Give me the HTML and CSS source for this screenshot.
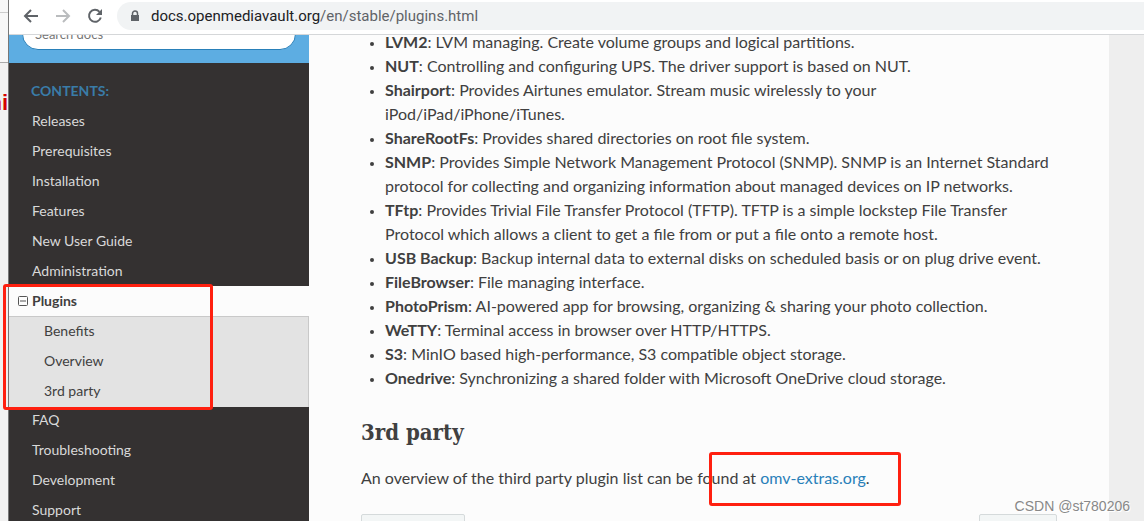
FILE: index.html
```html
<!DOCTYPE html>
<html lang="en">
<head>
  <meta charset="UTF-8" />
  <meta name="viewport" content="width=device-width, initial-scale=1" />
  <title>Plugins — openmediavault</title>
  <link rel="stylesheet" href="styles.css">
</head>
<body>
  <div class="behind">
    <div class="behind-tab"></div>
    <div class="behind-bar"></div>
    <div class="behind-text">ni</div>
  </div>

  <div class="browser">
    <header class="toolbar">
      <button type="button" class="nav-btn" aria-label="Back">
        <svg viewBox="0 0 16 16"><path d="M15 8H2M8 2L2 8l6 6" /></svg>
      </button>
      <button type="button" class="nav-btn" aria-label="Forward" disabled>
        <svg viewBox="0 0 16 16"><path d="M1 8h13M8 2l6 6-6 6" /></svg>
      </button>
      <button type="button" class="nav-btn" aria-label="Reload">
        <svg viewBox="0 0 16 16"><path d="M12.500 3.800A6 6 0 1 0 13.800 9.500" /><path class="solid" d="M15 1v6H9z" /></svg>
      </button>
      <div class="address">
        <svg class="lock" viewBox="0 0 10 12"><path d="M1 5h8v6H1z" /><path class="shackle" d="M2.500 5V3.500a2.500 2.500 0 0 1 5 0V5" /></svg>
        <span class="url"><b>docs.openmediavault.org</b>/en/stable/plugins.html</span>
      </div>
    </header>

    <div class="page">
      <nav class="sidebar">
        <div class="search">
          <input type="text" placeholder="Search docs" aria-label="Search docs" />
        </div>
        <p class="caption">Contents:</p>
        <ul class="menu">
          <li><a href="#">Releases</a></li>
          <li><a href="#">Prerequisites</a></li>
          <li><a href="#">Installation</a></li>
          <li><a href="#">Features</a></li>
          <li><a href="#">New User Guide</a></li>
          <li><a href="#">Administration</a></li>
          <li class="current">
            <a href="#"><svg viewBox="0 0 10 10"><path d="M1.500.5h7a1 1 0 0 1 1 1v7a1 1 0 0 1-1 1h-7a1 1 0 0 1-1-1v-7a1 1 0 0 1 1-1zM2 5h6" /></svg>Plugins</a>
            <ul class="submenu">
              <li><a href="#">Benefits</a></li>
              <li><a href="#">Overview</a></li>
              <li><a href="#third-party">3rd party</a></li>
            </ul>
          </li>
          <li><a href="#">FAQ</a></li>
          <li><a href="#">Troubleshooting</a></li>
          <li><a href="#">Development</a></li>
          <li><a href="#">Support</a></li>
        </ul>
      </nav>

      <main class="content">
        <ul class="plugins">
          <li><strong>LVM2</strong>: LVM managing. Create volume groups and logical partitions.</li>
          <li><strong>NUT</strong>: Controlling and configuring UPS. The driver support is based on NUT.</li>
          <li><strong>Shairport</strong>: Provides Airtunes emulator. Stream music wirelessly to your iPod/iPad/iPhone/iTunes.</li>
          <li><strong>ShareRootFs</strong>: Provides shared directories on root file system.</li>
          <li><strong>SNMP</strong>: Provides Simple Network Management Protocol (SNMP). SNMP is an Internet Standard protocol for collecting and organizing information about managed devices on IP networks.</li>
          <li><strong>TFtp</strong>: Provides Trivial File Transfer Protocol (TFTP). TFTP is a simple lockstep File Transfer Protocol which allows a client to get a file from or put a file onto a remote host.</li>
          <li><strong>USB Backup</strong>: Backup internal data to external disks on scheduled basis or on plug drive event.</li>
          <li><strong>FileBrowser</strong>: File managing interface.</li>
          <li><strong>PhotoPrism</strong>: AI-powered app for browsing, organizing &amp; sharing your photo collection.</li>
          <li><strong>WeTTY</strong>: Terminal access in browser over HTTP/HTTPS.</li>
          <li><strong>S3</strong>: MinIO based high-performance, S3 compatible object storage.</li>
          <li><strong>Onedrive</strong>: Synchronizing a shared folder with Microsoft OneDrive cloud storage.</li>
        </ul>
        <h2 id="third-party">3rd party</h2>
        <p>An overview of the third party plugin list can be found at <a href="#">omv-extras.org</a>.</p>
        <div class="pager">
          <button type="button" class="prev" aria-label="Previous"></button>
          <button type="button" class="next" aria-label="Next"></button>
        </div>
      </main>
    </div>
  </div>

  <div class="mark mark-menu"></div>
  <div class="mark mark-link"></div>
  <div class="watermark">CSDN @st780206</div>
</body>
</html>
```

FILE: styles.css
```css
* {
  box-sizing: border-box;
}

body {
  position: relative;
  display: flex;
  height: 100vh;
  margin: 0;
  overflow: hidden;
  background: #eee;
  color: #404040;
  font-family: Lato, sans-serif;
  font-size: 16px;
  line-height: 24px;
}

ul {
  margin: 0;
  padding: 0;
  list-style: none;
}

a {
  color: #2980b9;
  text-decoration: none;
}

/* strip of the window behind */
.behind {
  flex: none;
  width: 9px;
  overflow: hidden;
  background: #f1f1f1;
  border-right: 1px solid #777;
}

.behind-tab {
  height: 13px;
  background: #f7f7f7;
  border-bottom: 1px solid #ccc;
}

.behind-bar {
  height: 50px;
  background: #f7f7f7;
  border-bottom: 1px solid #aaa;
}

.behind-text {
  display: flex;
  justify-content: flex-end;
  margin-top: 28px;
  color: #d40000;
  font-family: "Liberation Sans", sans-serif;
  font-size: 22px;
  font-weight: bold;
}

.browser {
  display: flex;
  flex: 1;
  flex-direction: column;
  min-width: 0;
}

.toolbar {
  display: flex;
  flex: none;
  align-items: center;
  height: 35px;
  padding: 0 0 2px 14px;
  background: #fff;
  border-bottom: 1px solid #d5d7d9;
}

.nav-btn {
  width: 16px;
  height: 16px;
  margin-right: 16px;
  padding: 0;
  border: none;
  background: none;
  color: #5f6368;
}

.nav-btn:disabled {
  color: #babcbe;
}

.nav-btn svg {
  display: block;
  fill: none;
  stroke: currentColor;
  stroke-width: 2;
}

.nav-btn .solid {
  fill: currentColor;
  stroke: none;
}

.address {
  display: flex;
  flex: 1;
  align-items: center;
  gap: 11px;
  height: 28px;
  margin-left: -2px;
  padding-left: 13px;
  background: #f1f3f4;
  border-radius: 14px 0 0 14px;
}

.lock {
  width: 10px;
  height: 12px;
  fill: #5f6368;
}

.lock .shackle {
  fill: none;
  stroke: #5f6368;
  stroke-width: 1.5;
}

.url {
  color: #5f6368;
  font-family: Roboto, sans-serif;
  font-size: 15px;
}

.url b {
  color: #202124;
  font-weight: 400;
}

.page {
  display: flex;
  flex: 1;
  min-height: 0;
  overflow: hidden;
}

.sidebar {
  flex: none;
  width: 300px;
  background: #343131;
}

.search {
  display: flex;
  align-items: flex-end;
  height: 28px;
  padding: 0 13px 13px;
  background: #5dade2;
}

.search input {
  flex: 1;
  height: 32px;
  padding: 0 12px;
  border: 1px solid #2980b9;
  border-radius: 16px;
  background: #fff;
  font-family: Lato, sans-serif;
  font-size: 13px;
}

.search input::placeholder {
  color: #757575;
}

.caption {
  margin: 12px 0 0;
  padding: 0 22px;
  color: #3a7ca8;
  font-size: 14px;
  font-weight: 700;
  line-height: 31px;
  text-transform: uppercase;
}

.menu a {
  display: block;
  padding: 6px 23px;
  color: #d9d9d9;
  font-size: 14px;
  line-height: 18px;
}

.menu .current > a {
  display: flex;
  align-items: center;
  gap: 4px;
  padding-left: 9px;
  background: #fcfcfc;
  color: #404040;
  font-weight: 700;
}

.menu .current ~ li a {
  padding-top: 4px;
  padding-bottom: 8px;
}

.current svg {
  width: 10px;
  height: 10px;
  fill: none;
  stroke: #555;
}

.submenu {
  border: 1px solid #c9c9c9;
  border-width: 1px 1px 0 0;
  background: #e3e3e3;
}

.menu .submenu a {
  padding: 5px 23px 7px 35px;
  color: #404040;
}

.content {
  flex: 1;
  max-width: 800px;
  padding: 0 52px;
  background: #fcfcfc;
}

.plugins {
  margin: -5px 0 24px;
}

.plugins li {
  margin-left: 24px;
  list-style: disc;
}

.plugins li::marker {
  font-size: 12px;
}

h2 {
  margin: 0 0 16px;
  font-family: "Roboto Slab", "DejaVu Serif Condensed", "DejaVu Serif", serif;
  font-size: 22px;
  line-height: 36px;
}

.content p {
  margin: 0 0 24px;
}

.pager {
  display: flex;
  justify-content: space-between;
}

.pager button {
  width: 104px;
  height: 40px;
  border: 1px solid #d5dadb;
  border-radius: 2px;
  background: #f3f6f6;
}

.pager .next {
  width: 78px;
}

/* red frames drawn over the page */
.mark {
  position: absolute;
  border: 3px solid #ff2010;
  border-radius: 3px;
}

.mark-menu {
  top: 284px;
  left: 3px;
  width: 210px;
  height: 126px;
}

.mark-link {
  top: 452px;
  left: 709px;
  width: 192px;
  height: 54px;
}

.watermark {
  position: absolute;
  right: 14px;
  bottom: 3px;
  color: #888;
  font-family: "Liberation Sans", sans-serif;
  font-size: 14px;
  text-shadow: 1px 1px 0 #fff;
}
```
